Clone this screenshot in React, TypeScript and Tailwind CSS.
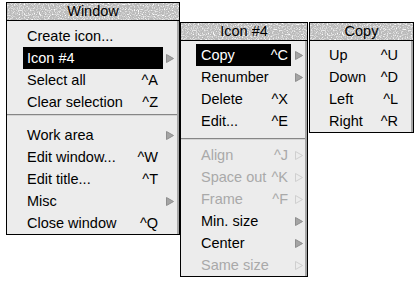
import React from 'react';

type Item = {
  label: string;
  key?: string;
  sub?: boolean;
  off?: boolean;
  hi?: boolean;
  sep?: boolean;
};

const Arrow = ({ off }: { off?: boolean }) => (
  <svg width="8" height="9" viewBox="0 0 8 9" className="shrink-0">
    <path
      d="M0.5 0.5 L7.5 4.5 L0.5 8.5 Z"
      fill={off ? 'none' : '#a4a4a4'}
      stroke={off ? '#cfcfcf' : '#8e8e8e'}
      strokeWidth="1"
    />
  </svg>
);

const WINDOW: Item[] = [
  { label: 'Create icon...' },
  { label: 'Icon #4', sub: true, hi: true },
  { label: 'Select all', key: '^A' },
  { label: 'Clear selection', key: '^Z' },
  { label: '', sep: true },
  { label: 'Work area', sub: true },
  { label: 'Edit window...', key: '^W' },
  { label: 'Edit title...', key: '^T' },
  { label: 'Misc', sub: true },
  { label: 'Close window', key: '^Q' },
];

const ICON: Item[] = [
  { label: 'Copy', key: '^C', sub: true, hi: true },
  { label: 'Renumber', sub: true },
  { label: 'Delete', key: '^X' },
  { label: 'Edit...', key: '^E' },
  { label: '', sep: true },
  { label: 'Align', key: '^J', sub: true, off: true },
  { label: 'Space out', key: '^K', sub: true, off: true },
  { label: 'Frame', key: '^F', sub: true, off: true },
  { label: 'Min. size', sub: true },
  { label: 'Center', sub: true },
  { label: 'Same size', sub: true, off: true },
];

const COPY: Item[] = [
  { label: 'Up', key: '^U' },
  { label: 'Down', key: '^D' },
  { label: 'Left', key: '^L' },
  { label: 'Right', key: '^R' },
];

// grainy grey title strip like the RISC OS menu headers
const Title = ({ text, id }: { text: string; id: string }) => (
  <div className="relative h-[18px] border-b border-black bg-[#bababa] flex items-center justify-center leading-none text-black overflow-hidden">
    <svg className="absolute inset-0 w-full h-full" aria-hidden>
      <filter id={id}>
        <feTurbulence type="fractalNoise" baseFrequency="0.8" numOctaves="2" seed="3" />
        <feColorMatrix type="matrix" values="0 0 0 0 1  0 0 0 0 1  0 0 0 0 1  0 0 0 3 -1.4" />
      </filter>
      <rect width="100%" height="100%" filter={`url(#${id})`} />
    </svg>
    <span className="relative">{text}</span>
  </div>
);

const Sep = ({ h, top }: { h: string; top: string }) => (
  <div className={`${h} ${top}`}>
    <div className="h-[1px] bg-[#868686]" />
    <div className="h-[1px] bg-[#d4d4d4]" />
  </div>
);

export default function App() {
  return (
    <div
      className="w-[420px] h-[285px] bg-white flex items-start text-[14.5px] leading-none"
      style={{ fontFamily: '"Liberation Sans", Arial, sans-serif' }}
    >
      {/* Window menu */}
      <div className="ml-[6px] mt-[2px] w-[174px] border border-black bg-[#ececec]">
        <Title text="Window" id="nw" />
        <div className="pt-[4px] border-r-2 border-[#a6a6a6]">
          {WINDOW.map(i =>
            i.sep ? (
              <Sep key="sep" h="h-[11px]" top="pt-[1px]" />
            ) : (
              <div key={i.label} className="flex items-center h-[22px]">
                <div className={`flex items-center justify-between h-[22px] ml-[16px] w-[140px] pl-[4px] pr-[5px] ${i.hi ? 'bg-black text-white' : 'text-black'}`}>
                  <span>{i.label}</span>
                  {i.key && <span>{i.key}</span>}
                </div>
                {i.sub && <div className="ml-[3px]"><Arrow /></div>}
              </div>
            )
          )}
        </div>
      </div>

      {/* Icon #4 submenu */}
      <div className="mt-[22px] w-[128px] border border-black bg-[#ececec]">
        <Title text="Icon #4" id="ni" />
        <div className="pt-[3px] border-r-2 border-[#a6a6a6]">
          {ICON.map(i =>
            i.sep ? (
              <Sep key="sep" h="h-[12px]" top="pt-[6px]" />
            ) : (
              <div key={i.label} className="flex items-center h-[22px]">
                <div className={`flex items-center justify-between h-[22px] ml-[15px] w-[95px] pl-[5px] pr-[3px] ${i.hi ? 'bg-black text-white' : i.off ? 'text-[#a9a9a9]' : 'text-black'}`}>
                  <span>{i.label}</span>
                  {i.key && <span>{i.key}</span>}
                </div>
                {i.sub && <div className="ml-[4px]"><Arrow off={i.off} /></div>}
              </div>
            )
          )}
        </div>
      </div>

      {/* Copy submenu */}
      <div className="ml-[1px] mt-[22px] w-[105px] border border-black bg-[#ececec]">
        <Title text="Copy" id="nc" />
        <div className="pt-[3px] border-r-2 border-[#a6a6a6]">
          {COPY.map(i => (
            <div key={i.label} className="flex items-center justify-between h-[22px] ml-[19px] w-[69px] text-black">
              <span>{i.label}</span>
              <span>{i.key}</span>
            </div>
          ))}
        </div>
      </div>
    </div>
  );
}
